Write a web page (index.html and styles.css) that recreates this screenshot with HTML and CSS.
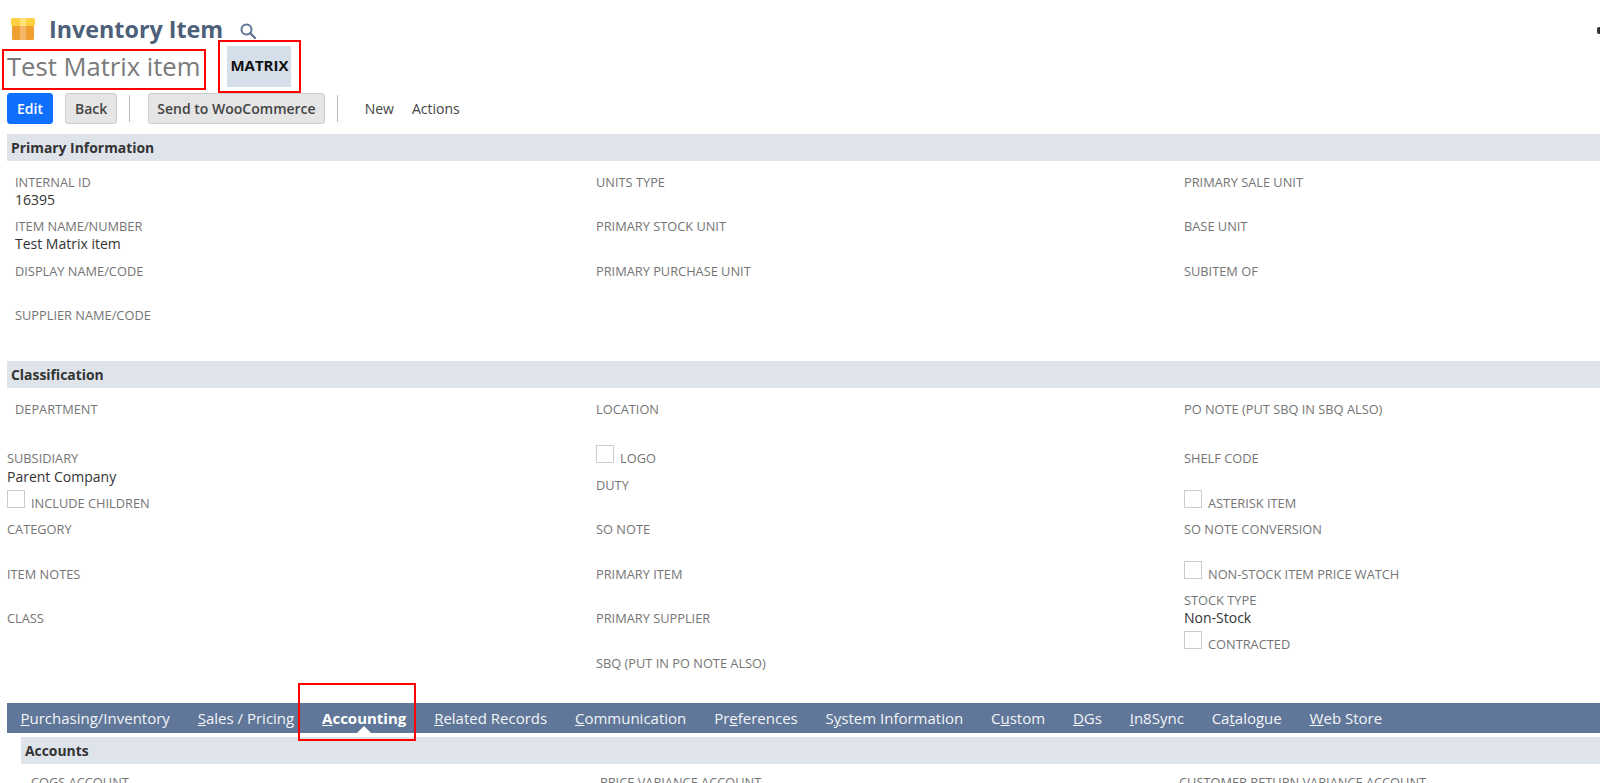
FILE: index.html
```html
<!DOCTYPE html>
<html lang="en">
<head>
<meta charset="utf-8">
<title>Inventory Item</title>
<link rel="stylesheet" href="styles.css">
</head>
<body>
<header class="page-head">
  <div class="title-row">
    <svg class="item-icon" width="24" height="24" viewBox="0 0 24 24" aria-hidden="true">
      <rect x="1" y="8" width="22" height="15" rx="1.5" fill="#f0a030"/>
      <rect x="0" y="1" width="24" height="8" rx="1.5" fill="#fdd13f"/>
      <rect x="9" y="1" width="6" height="8" fill="#fee27a"/>
      <rect x="9" y="9" width="6" height="14" fill="#f5b765"/>
    </svg>
    <h1 class="title">Inventory Item</h1>
    <svg class="search-icon" width="18" height="18" viewBox="0 0 18 18" aria-hidden="true">
      <circle cx="7.5" cy="7.5" r="5" fill="none" stroke="#5f7596" stroke-width="2"/>
      <path d="M11.2 11.2 L16 16" stroke="#5f7596" stroke-width="2.4" stroke-linecap="round"/>
    </svg>
  </div>
  <div class="name-row">
    <span class="item-name">Test Matrix item</span>
    <span class="chip">MATRIX</span>
  </div>
  <div class="toolbar">
    <button class="btn btn-primary">Edit</button>
    <button class="btn">Back</button>
    <span class="sep"></span>
    <button class="btn btn-wide">Send to WooCommerce</button>
    <span class="sep sep-last"></span>
    <span class="menu">New</span>
    <span class="menu">Actions</span>
  </div>
</header>

<section class="section">
  <h2 class="bar">Primary Information</h2>
  <div class="fields fields-primary">
    <div class="col">
      <div class="field"><div class="label">Internal ID</div><div class="value">16395</div></div>
      <div class="field"><div class="label">Item Name/Number</div><div class="value">Test Matrix item</div></div>
      <div class="field"><div class="label">Display Name/Code</div></div>
      <div class="field"><div class="label">Supplier Name/Code</div></div>
    </div>
    <div class="col">
      <div class="field"><div class="label">Units Type</div></div>
      <div class="field"><div class="label">Primary Stock Unit</div></div>
      <div class="field"><div class="label">Primary Purchase Unit</div></div>
    </div>
    <div class="col">
      <div class="field"><div class="label">Primary Sale Unit</div></div>
      <div class="field"><div class="label">Base Unit</div></div>
      <div class="field"><div class="label">Subitem Of</div></div>
    </div>
  </div>
</section>

<section class="section section-class">
  <h2 class="bar">Classification</h2>
  <div class="fields fields-class">
    <div class="col">
      <div class="field field-tall inset"><div class="label">Department</div></div>
      <div class="field field-auto"><div class="label">Subsidiary</div><div class="value value-flush">Parent Company</div></div>
      <div class="check"><span class="box"></span><span class="label">Include Children</span></div>
      <div class="field"><div class="label">Category</div></div>
      <div class="field"><div class="label">Item Notes</div></div>
      <div class="field"><div class="label">Class</div></div>
    </div>
    <div class="col">
      <div class="field field-location"><div class="label">Location</div></div>
      <div class="check check-logo"><span class="box"></span><span class="label">Logo</span></div>
      <div class="field field-duty"><div class="label">Duty</div></div>
      <div class="field"><div class="label">SO Note</div></div>
      <div class="field"><div class="label">Primary Item</div></div>
      <div class="field"><div class="label">Primary Supplier</div></div>
      <div class="field"><div class="label">SBQ (Put in PO Note also)</div></div>
    </div>
    <div class="col">
      <div class="field field-tall"><div class="label">PO Note (Put SBQ in SBQ also)</div></div>
      <div class="field field-shelf"><div class="label">Shelf Code</div></div>
      <div class="check"><span class="box"></span><span class="label">Asterisk Item</span></div>
      <div class="field field-conv"><div class="label">SO Note Conversion</div></div>
      <div class="check"><span class="box"></span><span class="label">Non-Stock Item Price Watch</span></div>
      <div class="field field-auto"><div class="label">Stock Type</div><div class="value">Non-Stock</div></div>
      <div class="check"><span class="box"></span><span class="label">Contracted</span></div>
    </div>
  </div>
</section>

<nav class="tabs">
  <a class="tab"><u>P</u>urchasing/Inventory</a>
  <a class="tab"><u>S</u>ales / Pricing</a>
  <a class="tab tab-active"><u>A</u>ccounting</a>
  <a class="tab"><u>R</u>elated Records</a>
  <a class="tab"><u>C</u>ommunication</a>
  <a class="tab">Pr<u>e</u>ferences</a>
  <a class="tab">S<u>y</u>stem Information</a>
  <a class="tab">C<u>u</u>stom</a>
  <a class="tab"><u>D</u>Gs</a>
  <a class="tab"><u>I</u>n8Sync</a>
  <a class="tab">Ca<u>t</u>alogue</a>
  <a class="tab"><u>W</u>eb Store</a>
</nav>

<section class="subsection">
  <h2 class="bar">Accounts</h2>
  <div class="fields fields-accounts">
    <div class="label">COGS Account</div>
    <div class="label">Price Variance Account</div>
    <div class="label">Customer Return Variance Account</div>
  </div>
</section>

<div class="mark mark-name"></div>
<div class="mark mark-chip"></div>
<div class="mark mark-tab"></div>
<div class="cursor"></div>
</body>
</html>
```

FILE: styles.css
```css
* { box-sizing: border-box; }
html, body { height: 100%; }
body {
  margin: 0;
  height: 783px;
  overflow: hidden;
  background: #fff;
  font-family: "Open Sans", "Noto Sans", sans-serif;
  font-size: 13px;
  color: #333;
  position: relative;
}
.page-head { padding: 15px 0 0 7px; }
.title-row { display: flex; align-items: center; height: 28px; padding-left: 4px; }
.item-icon { flex: none; }
.title { margin: 0 0 0 14px; font-size: 23.3px; line-height: 28px; font-weight: 700; color: #4d5f79; }
.search-icon { margin: 4px 0 0 16px; flex: none; }
.name-row { display: flex; align-items: center; height: 41px; margin-top: 3px; }
.item-name { font-size: 25.6px; line-height: 41px; color: #7a7a7a; }
.chip {
  margin-left: 27px;
  width: 64px;
  height: 41px;
  padding-bottom: 3px;
  background: #d5dfea;
  color: #111;
  font-size: 15px;
  font-weight: 700;
  display: flex;
  align-items: center;
  justify-content: center;
}
.toolbar { display: flex; align-items: center; height: 31px; margin-top: 6px; }
.btn {
  font-family: inherit;
  font-size: 14px;
  font-weight: 600;
  height: 31px;
  padding: 0 9px;
  color: #444;
  background: #e5e5e5;
  border: 1px solid #ccc;
  border-radius: 3px;
  margin-right: 12px;
}
.btn-primary { background: #0f6fff; border-color: #0f6fff; color: #fff; }
.btn-wide { padding: 0 8px; }
.sep { width: 1px; height: 27px; background: #bbb; margin-right: 18px; }
.sep-last { margin-right: 27px; }
.menu { font-size: 14px; font-weight: 500; color: #444; margin-right: 18px; }
.section { margin: 10px 0 0 7px; }
.section-class { margin-top: 0; }
.bar {
  margin: 0;
  height: 27px;
  line-height: 27px;
  padding-left: 4px;
  background: #dfe3ea;
  font-size: 13.9px;
  font-weight: 700;
  color: #333;
}
.fields { display: grid; padding-left: 8px; }
.fields-primary { grid-template-columns: 581px 588px 1fr; padding-top: 12.5px; height: 200px; }
.fields-class { grid-template-columns: 589px 588px 1fr; padding-top: 13px; padding-left: 0; }
.col { display: flex; flex-direction: column; }
.inset { padding-left: 8px; }
.field { height: 44.5px; }
.field-tall { height: 49px; }
.field-location { height: 40px; }
.field-auto { height: auto; }
.field-duty { height: 44px; }
.field-shelf { height: 36px; }
.field-conv { height: 35.5px; }
.label { font-size: 12.8px; line-height: 17px; color: #757575; text-transform: uppercase; }
.value { font-size: 14px; line-height: 19px; color: #333; margin-top: -1px; }
.value-flush { margin-top: 0; }
.check { display: flex; align-items: flex-end; height: 26px; margin-bottom: 9px; }
.box { width: 18px; height: 18px; border: 1px solid #ccc; background: #fff; margin-right: 6px; flex: none; margin-bottom: 4px; }
.check-logo { margin-bottom: 10px; }
.tabs {
  display: flex;
  gap: 27.85px;
  margin: 0 0 0 7px;
  height: 30px;
  padding-left: 13.5px;
  align-items: center;
  background: #607799;
  position: absolute;
  top: 703px;
  left: 0;
  right: 0;
}
.tab { color: #f2f4f7; font-size: 15px; line-height: 30px; position: relative; white-space: nowrap; }
.tab-active { font-weight: 700; color: #fff; }
.tab-active::after {
  content: "";
  position: absolute;
  left: 50%;
  bottom: 0;
  margin-left: -7px;
  border: 7px solid transparent;
  border-top: 0;
  border-bottom-color: #fff;
}
.subsection { position: absolute; top: 737px; left: 21px; right: 0; }
.fields-accounts { padding: 10px 0 0 10px; grid-template-columns: 569px 579px 1fr; }
.mark { position: absolute; border: 2px solid #f00; }
.mark-name { left: 2px; top: 49px; width: 204px; height: 41px; }
.mark-chip { left: 218px; top: 40px; width: 83px; height: 53px; }
.mark-tab { left: 298px; top: 683px; width: 118px; height: 58px; }
.cursor { position: absolute; right: 0; top: 27px; width: 3px; height: 7px; background: #333; border-radius: 2px 0 0 2px; }
```
